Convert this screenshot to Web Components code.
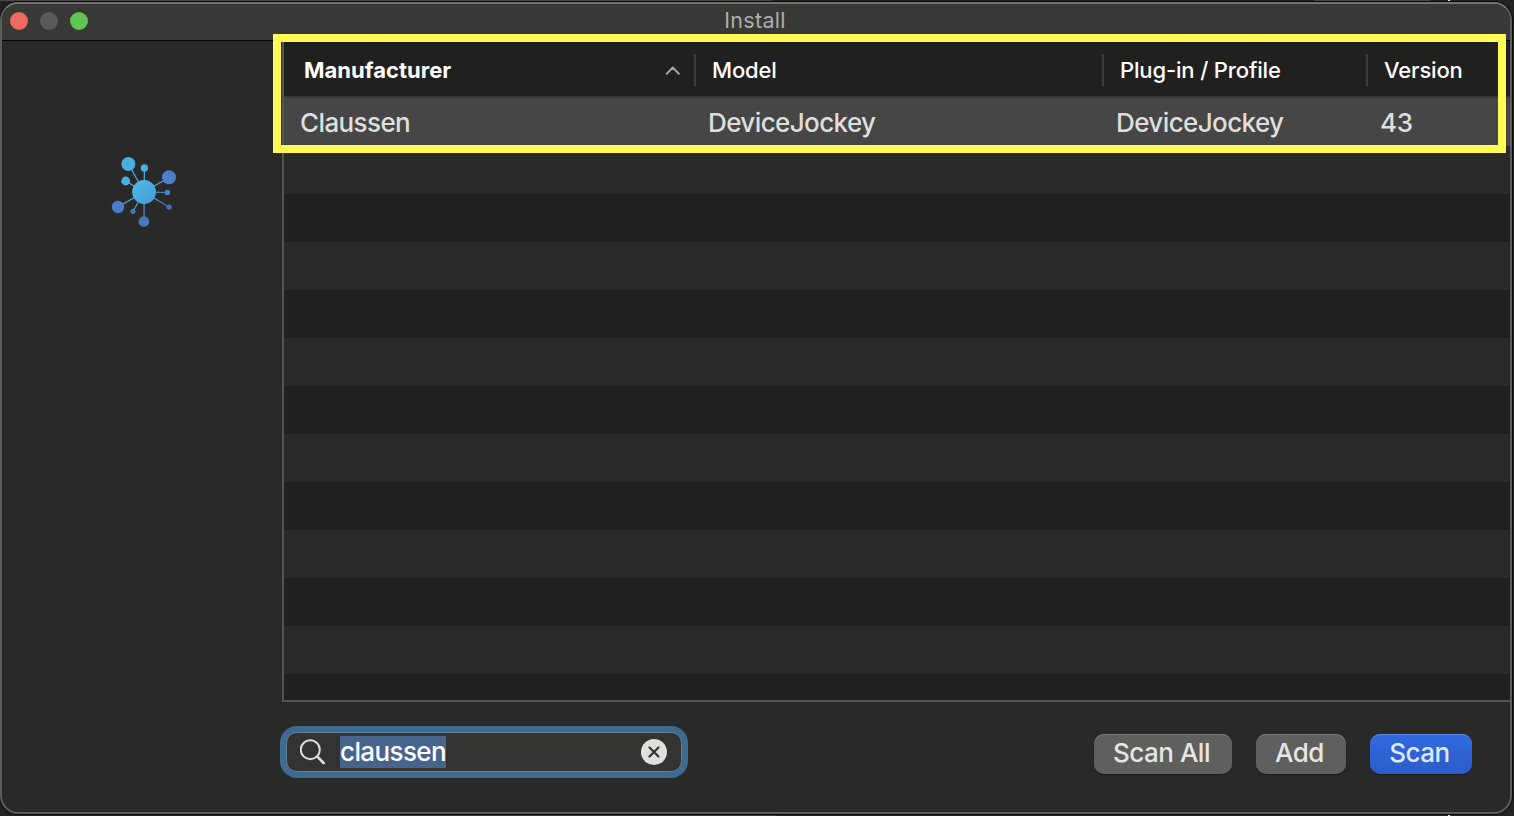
<!DOCTYPE html>
<html lang="en">
<head>
<meta charset="UTF-8">
<title>Install</title>
<style>
    html, body {
        height: 100%;
    }

    body {
        margin: 0;
        padding: 2px 2px 2px 0;
        box-sizing: border-box;
        overflow: hidden;
        background:
            linear-gradient(#494949, #494949) 0 0 / 772px 1px no-repeat,
            linear-gradient(#494949, #494949) 1315px 0 / 115px 1px no-repeat,
            linear-gradient(#eee, #eee) 1448px 0 / 2px 1px no-repeat,
            linear-gradient(#3b3637, #3b3637) 320px 815px / 457px 1px no-repeat,
            linear-gradient(#eee, #eee) 1448px 815px / 2px 1px no-repeat,
            #242222;
        font-family: Inter, "Liberation Sans", sans-serif;
        color: #dfdfde;
    }
</style>
</head>
<body>
<install-window heading="Install">
    <network-logo slot="sidebar"></network-logo>
    <device-table></device-table>
    <search-field slot="footer" value="claussen"></search-field>
    <push-button slot="footer" style="--w: 138px">Scan All</push-button>
    <push-button slot="footer" style="--w: 90px">Add</push-button>
    <push-button slot="footer" style="--w: 102px" primary>Scan</push-button>
</install-window>

<script>
class InstallWindow extends HTMLElement {
    connectedCallback() {
        this.attachShadow({ mode: 'open' });
        this.shadowRoot.innerHTML = `
            <style>
                :host {
                    display: flex;
                    flex-direction: column;
                    height: 812px;
                    box-sizing: border-box;
                    border: 2px solid #5b5b5a;
                    border-top-color: #737372;
                    border-radius: 18px;
                    overflow: hidden;
                    background: #292928;
                    box-shadow: 0 0 0 1px #080808;
                }

                header {
                    display: grid;
                    grid-template-columns: 1fr auto 1fr;
                    align-items: center;
                    height: 37px;
                    box-sizing: border-box;
                    padding-left: 8px;
                    background: #383837;
                    border-bottom: 1px solid #000;
                }

                .lights {
                    display: flex;
                    gap: 12px;
                    margin-top: -2px;
                }

                .lights i {
                    width: 18px;
                    height: 18px;
                    border-radius: 50%;
                    background: #5a5a59;
                }

                .lights .close { background: #ed6a5e; }
                .lights .zoom { background: #61c554; }

                h1 {
                    margin: -4px 10px 0 0;
                    font-size: 21.5px;
                    line-height: 28px;
                    font-weight: 400;
                    letter-spacing: 0.3px;
                    color: #aeaead;
                }

                .body {
                    flex: 1;
                    display: grid;
                    grid-template-columns: 280px 1fr;
                    min-height: 0;
                }

                aside {
                    padding: 114px 0 0 108px;
                }

                main {
                    display: flex;
                    flex-direction: column;
                }

                footer {
                    display: flex;
                    align-items: center;
                    gap: 24px;
                    height: 40px;
                    padding: 32px 38px 0 4px;
                }

                footer ::slotted(search-field) {
                    margin: -4px auto 0 0;
                }
            </style>
            <header>
                <div class="lights"><i class="close"></i><i></i><i class="zoom"></i></div>
                <h1>${this.getAttribute('heading')}</h1>
            </header>
            <div class="body">
                <aside><slot name="sidebar"></slot></aside>
                <main>
                    <slot></slot>
                    <footer><slot name="footer"></slot></footer>
                </main>
            </div>
        `;
    }
}

class NetworkLogo extends HTMLElement {
    connectedCallback() {
        this.attachShadow({ mode: 'open' });
        this.shadowRoot.innerHTML = `
            <style>
                :host { display: block; }
                svg { display: block; }
            </style>
            <svg width="70" height="74" viewBox="110 155 70 74">
                <defs>
                    <linearGradient id="g" gradientUnits="userSpaceOnUse" x1="128" y1="175" x2="164" y2="210">
                        <stop offset="0" stop-color="#4db5e5"/>
                        <stop offset=".5" stop-color="#4aa9dc"/>
                        <stop offset="1" stop-color="#4b76bd"/>
                    </linearGradient>
                    <linearGradient id="hub" x1="0" y1="0" x2="1" y2="1">
                        <stop offset="0" stop-color="#50bce9"/>
                        <stop offset="1" stop-color="#459bd2"/>
                    </linearGradient>
                </defs>
                <g stroke="url(#g)" stroke-width="1.2">
                    <path d="M144 192L128.500 164M144 192L144.500 168M144 192L125.500 181M144 192L169 177.500M144 192L167.500 192.500M144 192L169 207M144 192L144.100 221.500M144 192L133 211.500M144 192L118 207"/>
                </g>
                <circle cx="128.400" cy="164" r="7" fill="#4aaee0"/>
                <circle cx="144.400" cy="168" r="3.700" fill="#4aaee0"/>
                <circle cx="125.700" cy="181" r="4.400" fill="#4aaee0"/>
                <circle cx="169" cy="177.300" r="7" fill="#4b7fc8"/>
                <circle cx="167.400" cy="192.400" r="2.700" fill="#4b84c9"/>
                <circle cx="169.100" cy="207.100" r="2.700" fill="#4a70b6"/>
                <circle cx="143.900" cy="221.500" r="5.300" fill="#4a76c0"/>
                <circle cx="133" cy="211.300" r="2.600" fill="#4a76bd"/>
                <circle cx="118" cy="207" r="6.200" fill="#4c7dc6"/>
                <circle cx="144.100" cy="192" r="11.900" fill="url(#hub)"/>
            </svg>
        `;
    }
}

class DeviceTable extends HTMLElement {
    connectedCallback() {
        this.attachShadow({ mode: 'open' });
        this.shadowRoot.innerHTML = `
            <style>
                :host {
                    display: block;
                    position: relative;
                    z-index: 1;
                    height: 661px;
                    box-sizing: border-box;
                    border-left: 2px solid #555554;
                    border-bottom: 2px solid #555554;
                    /* header is 57px, then 48px stripes */
                    background: repeating-linear-gradient(#20201f 0 48px, #2a2a29 48px 96px) 0 57px;
                }

                .head, .row {
                    display: grid;
                    grid-template-columns: 412px 408px 264px 1fr;
                    align-items: center;
                }

                .head {
                    height: 57px;
                    box-sizing: border-box;
                    background: #20201f;
                    border-bottom: 2px solid #383837;
                    font-size: 22px;
                    font-weight: 500;
                    letter-spacing: -0.15px;
                    color: #fff;
                }

                .head span {
                    display: flex;
                    align-items: center;
                    justify-content: space-between;
                    height: 32px;
                    margin-top: 2px;
                    padding: 0 14px 0 16px;
                    border-right: 2px solid #3d3d3c;
                }

                .head span:first-child {
                    padding-left: 20px;
                    font-weight: 700;
                    letter-spacing: 0.03px;
                }

                .head span:last-child { border-right: 0; }

                .row {
                    height: 48px;
                    background: #464646;
                    font-size: 26px;
                    font-weight: 450;
                    letter-spacing: -0.6px;
                }

                .row span { padding-left: 12px; }
                .row span:first-child { padding-left: 16px; }
                .row span:last-child { letter-spacing: -0.2px; }

                /* sticks out over the title bar */
                .callout {
                    position: absolute;
                    left: -11px;
                    top: -7px;
                    width: 1233px;
                    height: 119px;
                    box-sizing: border-box;
                    border: 8px solid #fffb54;
                }
            </style>
            <div class="head">
                <span>Manufacturer
                    <svg width="15" height="10" viewBox="0 0 15 10"><path d="M1.800 8.800l6-6.300 6 6.300" fill="none" stroke="#a0a09f" stroke-width="2" stroke-linecap="round" stroke-linejoin="round"/></svg>
                </span>
                <span>Model</span>
                <span>Plug-in / Profile</span>
                <span>Version</span>
            </div>
            <div class="row">
                <span>Claussen</span>
                <span>DeviceJockey</span>
                <span>DeviceJockey</span>
                <span>43</span>
            </div>
            <div class="callout"></div>
        `;
    }
}

class SearchField extends HTMLElement {
    connectedCallback() {
        this.attachShadow({ mode: 'open' });
        this.shadowRoot.innerHTML = `
            <style>
                :host {
                    display: flex;
                    align-items: center;
                    width: 396px;
                    height: 40px;
                    box-sizing: border-box;
                    padding: 0 14px 0 13px;
                    border: 1px solid #5f7d95;
                    border-radius: 11px;
                    background: #333332;
                    box-shadow: 0 0 0 6px #3e6a90;
                    font-size: 26px;
                    font-weight: 450;
                    color: #fff;
                }

                .value {
                    margin: 0 auto 0 14px;
                    line-height: 32px;
                    letter-spacing: -0.6px;
                    background: #47648d;
                }
            </style>
            <svg width="26" height="26" viewBox="0 0 26 26" fill="none" stroke="#dfdfde" stroke-linecap="round">
                <circle cx="10.300" cy="10.700" r="9.500" stroke-width="2"/>
                <path d="M17.300 17.700l6.300 6.300" stroke-width="2.600"/>
            </svg>
            <span class="value">${this.getAttribute('value')}</span>
            <svg width="26" height="26" viewBox="0 0 26 26">
                <circle cx="13" cy="13" r="13" fill="#dfdfde"/>
                <path d="M8.500 8.500l9 9M17.500 8.500l-9 9" stroke="#333332" stroke-width="2.200" stroke-linecap="round"/>
            </svg>
        `;
    }
}

class PushButton extends HTMLElement {
    connectedCallback() {
        this.attachShadow({ mode: 'open' });
        this.shadowRoot.innerHTML = `
            <style>
                :host {
                    display: flex;
                    justify-content: center;
                    width: var(--w);
                    height: 40px;
                    box-sizing: border-box;
                    padding-right: 3px;
                    border-radius: 10px;
                    background: #5f5f5e;
                    box-shadow: inset 0 1px 0 #7b7b7a, 0 1px 1px rgba(0, 0, 0, 0.4);
                    font-size: 26px;
                    font-weight: 450;
                    line-height: 38px;
                    letter-spacing: -0.5px;
                    color: #e6e6e5;
                }

                :host([primary]) {
                    background: linear-gradient(#3069e0, #2c5cc8);
                    box-shadow: inset 0 1px 0 #5c88e6, 0 1px 1px rgba(0, 0, 0, 0.4);
                    color: #dfe8fb;
                }
            </style>
            <slot></slot>
        `;
    }
}

customElements.define('install-window', InstallWindow);
customElements.define('network-logo', NetworkLogo);
customElements.define('device-table', DeviceTable);
customElements.define('search-field', SearchField);
customElements.define('push-button', PushButton);
</script>
</body>
</html>
